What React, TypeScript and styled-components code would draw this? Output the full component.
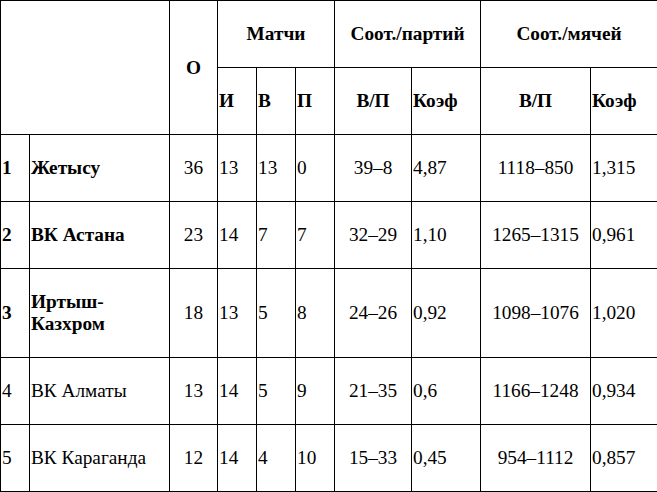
import React from "react";
import styled, { createGlobalStyle } from "styled-components";

const FONT = `"Liberation Serif", Tinos, "Times New Roman", serif`;

const Global = createGlobalStyle`
  html, body { margin: 0; padding: 0; background: #fff; }
  body { font-family: ${FONT}; color: #000; }
`;

const Table = styled.table`
  width: 657px;
  border-collapse: collapse;
  table-layout: fixed;
  font-family: ${FONT};
  font-size: 19.3px;
  line-height: 22px;
  color: #000;
`;

type Align = "left" | "center";

const Th = styled.th<{ $align?: Align }>`
  border: 1px solid #000;
  padding: 22px 1px;
  font-family: ${FONT};
  font-weight: bold;
  text-align: ${(p) => p.$align ?? "center"};
  vertical-align: middle;
`;

const Td = styled.td<{ $align?: Align; $bold?: boolean }>`
  border: 1px solid #000;
  padding: 22px 1px;
  font-family: ${FONT};
  font-weight: ${(p) => (p.$bold ? "bold" : "normal")};
  text-align: ${(p) => p.$align ?? "left"};
  vertical-align: middle;
`;

const widths = [29, 140, 48, 39, 39, 39, 77, 69, 110, 67];

type Row = {
  pos: string;
  team: string;
  pts: string;
  p: string;
  w: string;
  l: string;
  sets: string;
  setK: string;
  balls: string;
  ballK: string;
  bold: boolean;
};

const rows: Row[] = [
  { pos: "1", team: "Жетысу", pts: "36", p: "13", w: "13", l: "0", sets: "39–8", setK: "4,87", balls: "1118–850", ballK: "1,315", bold: true },
  { pos: "2", team: "ВК Астана", pts: "23", p: "14", w: "7", l: "7", sets: "32–29", setK: "1,10", balls: "1265–1315", ballK: "0,961", bold: true },
  { pos: "3", team: "Иртыш-Казхром", pts: "18", p: "13", w: "5", l: "8", sets: "24–26", setK: "0,92", balls: "1098–1076", ballK: "1,020", bold: true },
  { pos: "4", team: "ВК Алматы", pts: "13", p: "14", w: "5", l: "9", sets: "21–35", setK: "0,6", balls: "1166–1248", ballK: "0,934", bold: false },
  { pos: "5", team: "ВК Караганда", pts: "12", p: "14", w: "4", l: "10", sets: "15–33", setK: "0,45", balls: "954–1112", ballK: "0,857", bold: false },
];

export default function App() {
  return (
    <>
      <Global />
      <Table>
        <colgroup>
          {widths.map((w, i) => (
            <col key={i} style={{ width: w }} />
          ))}
        </colgroup>
        <thead>
          <tr>
            <Th colSpan={2} rowSpan={2}></Th>
            <Th rowSpan={2}>О</Th>
            <Th colSpan={3}>Матчи</Th>
            <Th colSpan={2}>Соот./партий</Th>
            <Th colSpan={2}>Соот./мячей</Th>
          </tr>
          <tr>
            <Th $align="left">И</Th>
            <Th $align="left">В</Th>
            <Th $align="left">П</Th>
            <Th>В/П</Th>
            <Th $align="left">Коэф</Th>
            <Th>В/П</Th>
            <Th $align="left">Коэф</Th>
          </tr>
        </thead>
        <tbody>
          {rows.map((r) => (
            <tr key={r.pos}>
              <Td $bold={r.bold}>{r.pos}</Td>
              <Td $bold={r.bold}>{r.team}</Td>
              <Td $align="center">{r.pts}</Td>
              <Td>{r.p}</Td>
              <Td>{r.w}</Td>
              <Td>{r.l}</Td>
              <Td $align="center">{r.sets}</Td>
              <Td>{r.setK}</Td>
              <Td $align="center">{r.balls}</Td>
              <Td>{r.ballK}</Td>
            </tr>
          ))}
        </tbody>
      </Table>
    </>
  );
}
